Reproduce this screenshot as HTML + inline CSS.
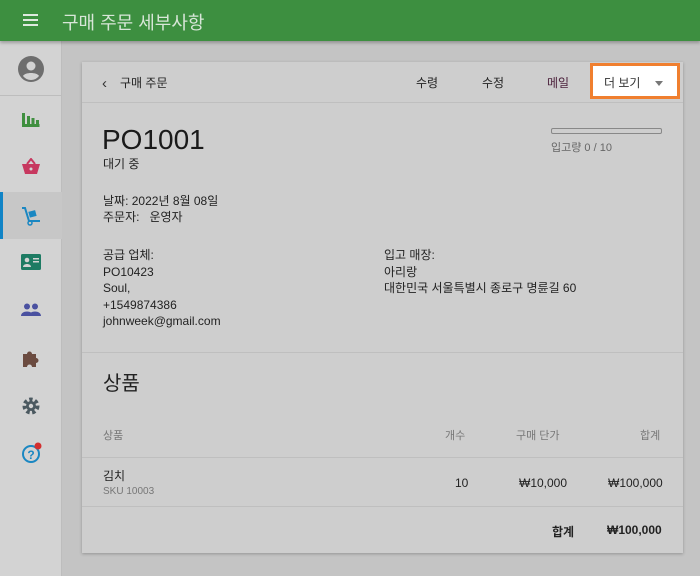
<!DOCTYPE html>
<html><head><meta charset="utf-8"><style>
*{margin:0;padding:0;box-sizing:border-box}
body{width:700px;height:576px;overflow:hidden;background:#c4c4c4;font-family:"Liberation Sans","Noto Sans CJK KR",sans-serif;color:#222;position:relative}
.a{position:absolute;white-space:nowrap}
#hdr{left:0;top:0;width:700px;height:41px;background:#3d8f40;box-shadow:0 2px 3px rgba(0,0,0,.25);z-index:3}
#side{left:0;top:41px;width:62px;height:535px;background:#d3d3d3;border-right:1px solid #bdbdbd}
#card{left:82px;top:62px;width:601px;height:491px;background:#cecece;box-shadow:0 1px 3px rgba(0,0,0,.25)}
.line{position:absolute;left:0;width:601px;height:1px;background:#bfbfbf}
.t13{font-size:12px;color:#222}
.g{color:#777}
</style></head><body>
<div id="hdr" class="a">
 <div class="a" style="left:23px;top:14px;width:15px;height:2px;background:#dfe9df;box-shadow:0 5px 0 #dfe9df,0 10px 0 #dfe9df"></div>
 <div class="a" style="left:62px;top:9px;font-size:18px;color:#d8e6d8">구매 주문 세부사항</div>
</div>
<div id="side" class="a">
 <svg class="a" style="left:18px;top:15px" width="26" height="26" viewBox="0 0 26 26"><circle cx="13" cy="13" r="13" fill="#6e6e6e"/><circle cx="13" cy="10" r="4.5" fill="#d3d3d3"/><path d="M5 20c2-4 14-4 16 0a10 10 0 0 1-16 0z" fill="#d3d3d3"/></svg>
 <div class="a" style="left:0;top:54px;width:62px;height:1px;background:#bdbdbd"></div>
 <svg class="a" style="left:22px;top:70px" width="18" height="16"><path d="M1.5 2v12.5h16" stroke="#3f8f3f" stroke-width="3" fill="none"/><rect x="5" y="5" width="3" height="9" fill="#3f8f3f"/><rect x="9.5" y="7" width="3" height="7" fill="#3f8f3f"/><rect x="14" y="9" width="3" height="5" fill="#3f8f3f"/></svg>
 <svg class="a" style="left:21px;top:117px" width="20" height="17"><path d="M6 6l4-5 4 5" stroke="#c7385f" stroke-width="2" fill="none"/><path d="M1 6h18l-3 10H4z" fill="#c7385f"/><circle cx="10" cy="11" r="1.5" fill="#d3d3d3"/></svg>
 <div class="a" style="left:0;top:151px;width:62px;height:47px;background:#c7c7c7"></div>
 <div class="a" style="left:0;top:151px;width:3px;height:47px;background:#1184c6"></div>
 <svg class="a" style="left:21px;top:165px" width="21" height="20"><path d="M1 2h3l4 13h11" stroke="#1a87c2" stroke-width="2" fill="none"/><rect x="8" y="5" width="7" height="6" fill="#1a87c2" transform="rotate(-15 11 8)"/><circle cx="9" cy="17" r="2" fill="none" stroke="#1a87c2" stroke-width="1.5"/></svg>
 <svg class="a" style="left:21px;top:213px" width="20" height="16"><rect width="20" height="16" rx="1.5" fill="#1d7b63"/><circle cx="6" cy="6" r="2.3" fill="#d3d3d3"/><path d="M2 13c0-4 8-4 8 0z" fill="#d3d3d3"/><rect x="12" y="4" width="6" height="1.5" fill="#d3d3d3"/><rect x="12" y="7" width="6" height="1.5" fill="#d3d3d3"/></svg>
 <svg class="a" style="left:21px;top:262px" width="20" height="14"><circle cx="6" cy="3.5" r="3" fill="#4a51a0"/><circle cx="14" cy="3.5" r="3" fill="#4a51a0"/><path d="M0 13c0-6 12-6 12 0z M8 13c0-6 12-6 12 0z" fill="#4a51a0"/></svg>
 <svg class="a" style="left:21px;top:307px" width="20" height="20"><path d="M2 6h4a2.5 2.5 0 1 1 5 0h4v4a2.5 2.5 0 1 1 0 5v4H11a2.5 2.5 0 1 0-5 0H2z" fill="#6b4b40"/></svg>
 <svg class="a" style="left:22px;top:356px" width="18" height="18" viewBox="0 0 18 18"><circle cx="9" cy="9" r="6" fill="none" stroke="#4b5960" stroke-width="5" stroke-dasharray="3 2.3"/><circle cx="9" cy="9" r="5" fill="#4b5960"/><circle cx="9" cy="9" r="2.2" fill="#d3d3d3"/></svg>
 <svg class="a" style="left:21px;top:401px" width="22" height="22"><circle cx="10" cy="12" r="8" fill="none" stroke="#1a87c2" stroke-width="2"/><text x="10" y="17" font-size="12" font-weight="bold" fill="#1a87c2" text-anchor="middle" font-family="Liberation Sans">?</text><circle cx="17" cy="4" r="3.5" fill="#d32f2f"/></svg>
</div>
<div id="card" class="a">
 <div class="a" style="left:20px;top:13px;font-size:15px;color:#333">‹</div>
 <div class="a t13" style="left:38px;top:12px">구매 주문</div>
 <div class="a t13" style="left:334px;top:12px">수령</div>
 <div class="a t13" style="left:400px;top:12px">수정</div>
 <div class="a t13" style="left:465px;top:12px;color:#4a1f3a">메일</div>
 <div class="a" style="left:508px;top:1px;width:90px;height:36px;background:#fff;border:3px solid #f07f2f"></div>
 <div class="a t13" style="left:522px;top:12px;color:#333">더 보기</div>
 <div class="a" style="left:573px;top:19px;border-left:4px solid transparent;border-right:4px solid transparent;border-top:5px solid #777"></div>
 <div class="line" style="top:40px"></div>
 <div class="a" style="left:20px;top:62px;font-size:28px;color:#1a1a1a">PO1001</div>
 <div class="a t13" style="left:21px;top:93px">대기 중</div>
 <div class="a" style="left:469px;top:66px;width:111px;height:6px;border:1px solid #888;border-radius:2px"></div>
 <div class="a" style="left:469px;top:77px;font-size:11px;color:#666">입고량 0 / 10</div>
 <div class="a t13" style="left:21px;top:131px;line-height:16px">날짜: 2022년 8월 08일<br>주문자: &nbsp; 운영자</div>
 <div class="a t13" style="left:21px;top:185px;line-height:16.5px">공급 업체:<br>PO10423<br>Soul,<br>+1549874386<br>johnweek@gmail.com</div>
 <div class="a t13" style="left:302px;top:185px;line-height:16.5px">입고 매장:<br>아리랑<br>대한민국 서울특별시 종로구 명륜길 60</div>
 <div class="line" style="top:290px"></div>
 <div class="a" style="left:21px;top:305px;font-size:20px;color:#222">상품</div>
 <div class="a g" style="left:21px;top:365px;font-size:11px">상품</div>
 <div class="a g" style="left:363px;top:365px;font-size:11px">개수</div>
 <div class="a g" style="left:434px;top:365px;font-size:11px">구매 단가</div>
 <div class="a g" style="left:558px;top:365px;font-size:11px">합계</div>
 <div class="line" style="top:395px"></div>
 <div class="a t13" style="left:21px;top:405px">김치</div>
 <div class="a g" style="left:21px;top:424px;font-size:10px">SKU 10003</div>
 <div class="a t13" style="left:373px;top:414px">10</div>
 <div class="a t13" style="left:437px;top:414px">₩10,000</div>
 <div class="a t13" style="left:526px;top:414px">₩100,000</div>
 <div class="line" style="top:444px"></div>
 <div class="a t13" style="left:470px;top:461px;font-weight:bold">합계</div>
 <div class="a t13" style="left:525px;top:461px;font-weight:bold">₩100,000</div>
</div>
</body></html>
